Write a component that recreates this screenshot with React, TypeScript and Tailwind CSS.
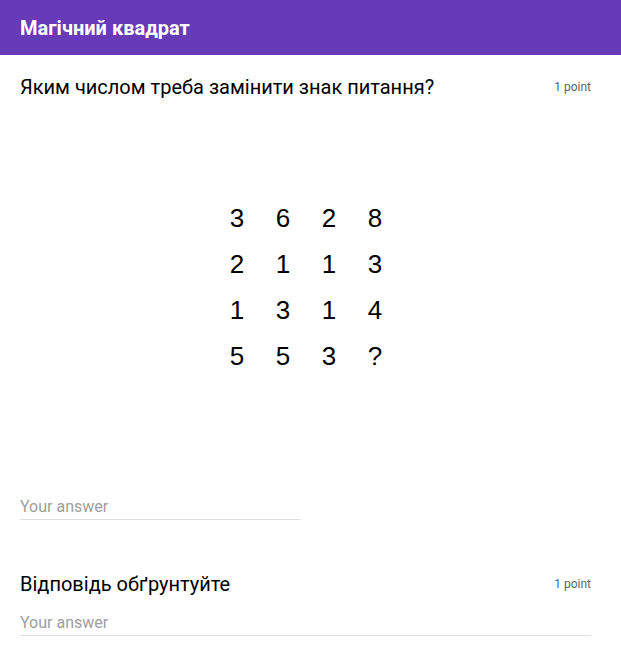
import React from "react";

const grid = [
  ["3", "6", "2", "8"],
  ["2", "1", "1", "3"],
  ["1", "3", "1", "4"],
  ["5", "5", "3", "?"],
];

export default function App() {
  return (
    <div className="w-[621px] h-[659px] bg-white overflow-hidden" style={{ fontFamily: "Roboto, 'Noto Sans', sans-serif" }}>
      <div className="h-[55px] bg-[#673ab7] px-5 flex items-center">
        <span className="text-white text-[20px] font-bold leading-6">Магічний квадрат</span>
      </div>
      <div className="pl-5 pr-[30px]">
        <div className="pt-5 flex justify-between items-center">
          <span className="text-[20px] leading-6 text-black">Яким числом треба замінити знак питання?</span>
          <span className="text-[12px] leading-4 text-[#5f6368]">1 point</span>
        </div>
        <div className="mt-[96px] ml-[194px] grid grid-cols-[repeat(4,46px)] grid-rows-[repeat(4,46px)] text-black text-[26px]" style={{ fontFamily: "'Liberation Sans', Arial, sans-serif" }}>
          {grid.flat().map((d, i) => (
            <div key={i} className="flex items-center justify-center leading-[46px]">{d}</div>
          ))}
        </div>
        <div className="mt-[118px] w-[281px] border-b border-[#e0e0e0] pb-[2px]">
          <span className="block text-[16px] leading-5 text-[#9e9e9e]">Your answer</span>
        </div>
        <div className="mt-[52px] flex justify-between items-center">
          <span className="text-[20px] leading-6 text-black">Відповідь обґрунтуйте</span>
          <span className="text-[12px] leading-4 text-[#5f6368]">1 point</span>
        </div>
        <div className="mt-[17px] w-full border-b border-[#e0e0e0] pb-[2px]">
          <span className="block text-[16px] leading-5 text-[#9e9e9e]">Your answer</span>
        </div>
      </div>
    </div>
  );
}
